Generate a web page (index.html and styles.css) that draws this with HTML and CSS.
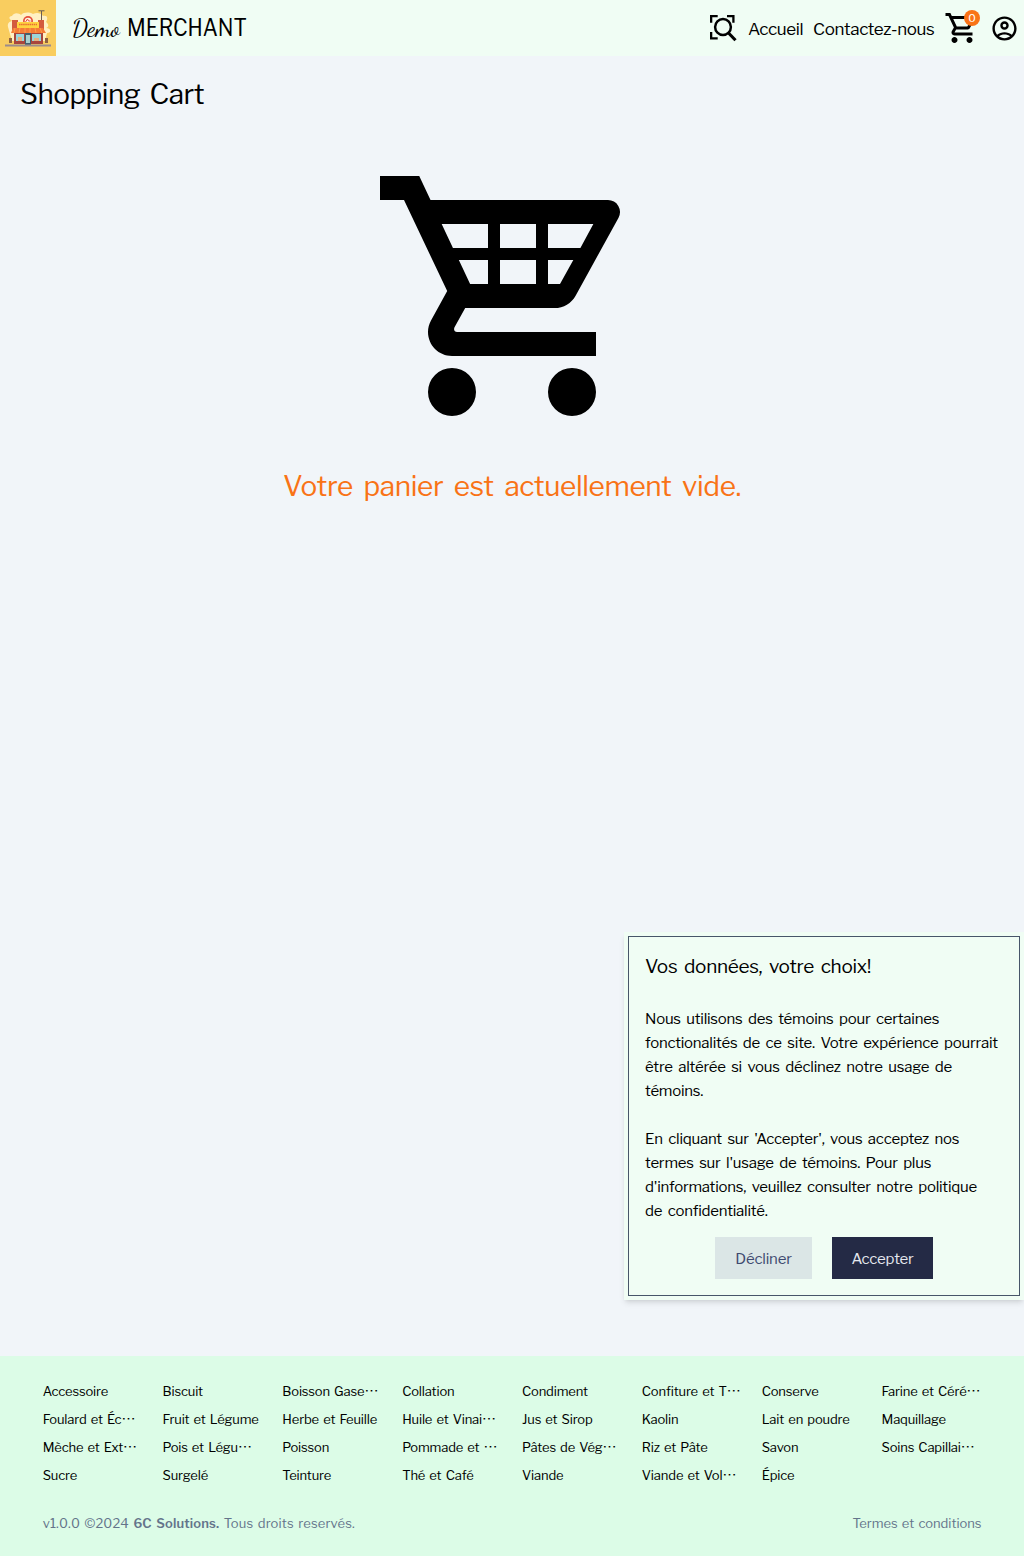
FILE: index.html
```html
<!DOCTYPE html>
<html lang="fr">
<head>
<meta charset="utf-8">
<title>Demo Merchant</title>
<link rel="stylesheet" href="styles.css">
</head>
<body>
<div class="page">
  <header class="header">
    <svg class="logo" viewBox="0 0 56 56">
      <rect width="56" height="56" fill="#f9cd5f"/>
      <path fill="#fff0c4" d="M8 27c-1-4 2-6 5-6-4-1-5-5-1-5 2-4 7-3 9-1 3-3 8-3 12-1 4-2 8-1 10 2 5-1 5 3 3 6 3 2 3 5 0 6 5 0 6 5 1 5l-2 8H12z"/>
      <path d="M41.500 11v12M38.500 10.800h6" stroke="#695c55"/>
      <path d="M12 20h6v10h-6zM38 20h6v10h-6z" fill="#d35b3e"/>
      <circle cx="28" cy="21" r="5" fill="#e64e3c"/>
      <circle cx="28" cy="21" r="3.300" fill="#fff5df"/>
      <path d="M25.500 22l2-3 1 2h2" fill="none" stroke="#e64e3c"/>
      <path d="M14 30h29v14H14z" fill="#a9453d"/>
      <path d="M16 34h8v7h-8zM32 34h9v7h-9z" fill="#9ad6dc"/>
      <path d="M25 33h6v12h-6z" fill="#43606d"/><path d="M26 35h4v8h-4z" fill="#a9cfcd"/>
      <path d="M18 37h4v4h-4zM34 38h5v3h-5z" fill="#e8b080"/>
      <path d="M17 22h22v6H17z" fill="#ffd33f"/>
      <path d="M19 24.500h18" stroke="#e86c33" stroke-width="1.600" stroke-dasharray="1.500 .6"/>
      <path d="M13 28h30l3 5H11z" fill="#f47b36"/>
      <path d="M15 28l-1 5M20 28l-1 5M25 28v5M30 28v5M35 28l1 5M40 28l2 5" stroke="#f9a04c" stroke-width="1"/>
      <path d="M9 38h3v5H9zM45 38h3v5h-3z" fill="#8e6142"/>
      <path d="M5 45.500h46" stroke="#9c8c8c" stroke-width="2"/>
    </svg>
    <div class="brand"><span class="script">Demo</span><span class="name">MERCHANT</span></div>
    <nav class="nav">
      <svg class="scan" viewBox="0 0 27 27" fill="none" stroke="#000">
        <path stroke-width="2.300" d="M1.150 7.700V1.150H7.700M17 1.150h6.400V7.700M1.150 17v6.400H7.700"/>
        <circle cx="13" cy="12" r="7.900" stroke-width="2.500"/>
        <path stroke-width="3.100" d="M18.300 17.800l7.200 7.500"/>
      </svg>
      <a class="home">Accueil</a>
      <a class="contact">Contactez-nous</a>
      <div class="basket">
        <svg viewBox="0 0 24 24"><path d="M15.550 13c.75 0 1.410-.41 1.750-1.030l3.580-6.490c.37-.66-.11-1.480-.87-1.480H5.210l-.94-2H1v2h2l3.600 7.590-1.350 2.440C4.520 15.370 5.480 17 7 17h12v-2H7l1.100-2h7.450zM6.160 6h12.150l-2.760 5H8.530L6.160 6zM7 18c-1.100 0-1.990.9-1.990 2S5.900 22 7 22s2-.9 2-2-.9-2-2-2zm10 0c-1.100 0-1.990.9-1.990 2s.89 2 1.990 2 2-.9 2-2-.9-2-2-2z"/></svg>
        <span class="badge">0</span>
      </div>
      <svg class="account" viewBox="0 0 24 24"><path d="M12 2C6.480 2 2 6.480 2 12s4.480 10 10 10 10-4.480 10-10S17.520 2 12 2zM7.350 18.500C8.660 17.560 10.260 17 12 17s3.340.56 4.650 1.500C15.340 19.440 13.740 20 12 20s-3.340-.56-4.650-1.500zm10.790-1.380C16.450 15.800 14.320 15 12 15s-4.450.8-6.140 2.120C4.700 15.730 4 13.950 4 12c0-4.420 3.580-8 8-8s8 3.580 8 8c0 1.950-.7 3.730-1.860 5.120zM12 6c-1.930 0-3.500 1.570-3.500 3.500S10.070 13 12 13s3.500-1.570 3.500-3.500S13.930 6 12 6zm0 5c-.83 0-1.500-.67-1.500-1.500S11.170 8 12 8s1.500.67 1.500 1.500S12.830 11 12 11z"/></svg>
    </nav>
  </header>

  <main class="main">
    <h1 class="title">Shopping Cart</h1>
    <div class="empty">
      <svg class="cart" viewBox="0 0 24 24"><path fill-rule="evenodd" d="M7 18a2 2 0 1 0 0 4 2 2 0 0 0 0-4zM1 2v2h2l3.600 7.590-1.350 2.450c-.16.28-.25.61-.25.96 0 1.100.9 2 2 2h12v-2H7.420c-.14 0-.25-.11-.25-.25l.03-.12.9-1.630h7.450c.75 0 1.410-.41 1.750-1.030l3.580-6.490A1.003 1.003 0 0 0 20 4H5.210l-.94-2H1zM17 18a2 2 0 1 0 0 4 2 2 0 0 0 0-4zM6.140 6H10v2H7.080zM11 6h3v2h-3zM15 6h3.780l-1.080 2H15zM7.570 9H10v2H8.510zM11 9h3v2h-3zM15 9h2.110L16 11h-1z"/></svg>
      <p class="message">Votre panier est actuellement vide.</p>
    </div>
  </main>

  <footer class="footer">
    <div class="categories">
      <a>Accessoire</a><a>Biscuit</a><a>Boisson Gase<i>…</i></a><a>Collation</a><a>Condiment</a><a>Confiture et T<i>…</i></a><a>Conserve</a><a>Farine et Céré<i>…</i></a>
      <a>Foulard et Éc<i>…</i></a><a>Fruit et Légume</a><a>Herbe et Feuille</a><a>Huile et Vinai<i>…</i></a><a>Jus et Sirop</a><a>Kaolin</a><a>Lait en poudre</a><a>Maquillage</a>
      <a>Mèche et Ext<i>…</i></a><a>Pois et Légu<i>…</i></a><a>Poisson</a><a>Pommade et <i>…</i></a><a>Pâtes de Vég<i>…</i></a><a>Riz et Pâte</a><a>Savon</a><a>Soins Capillai<i>…</i></a>
      <a>Sucre</a><a>Surgelé</a><a>Teinture</a><a>Thé et Café</a><a>Viande</a><a>Viande et Vol<i>…</i></a><a>Épice</a>
    </div>
    <div class="legal"><span>v1.0.0 ©2024 <b>6C Solutions.</b> Tous droits reservés.</span><a>Termes et conditions</a></div>
  </footer>

  <section class="consent">
    <div class="consent-box">
      <h2>Vos données, votre choix!</h2>
      <p>Nous utilisons des témoins pour certaines<br>fonctionalités de ce site. Votre expérience pourrait<br>être altérée si vous déclinez notre usage de<br>témoins.</p>
      <p>En cliquant sur 'Accepter', vous acceptez nos<br>termes sur l'usage de témoins. Pour plus<br>d'informations, veuillez consulter notre politique<br>de confidentialité.</p>
      <div class="actions"><button class="decline">Décliner</button><button class="accept">Accepter</button></div>
    </div>
  </section>
</div>
</body>
</html>
```
FILE: styles.css
```css
* { box-sizing: border-box; }
body, h1, h2, p { margin: 0; font-weight: 400; }
body { font: 15px/24px "Libre Franklin", "Liberation Sans", Arial, sans-serif; color: #000; background: #f1f5f9; }
svg { display: block; flex: none; }
.page { position: relative; height: 1556px; display: flex; flex-direction: column; }

.header { height: 56px; flex: none; display: flex; align-items: center; background: #f0fdf4; padding-right: 5px; }
.logo { width: 56px; height: 56px; }
.brand { display: flex; align-items: baseline; margin-left: 16px; font-size: 23px; line-height: 32px; white-space: nowrap; }
.script { width: 55px; font-family: "Dancing Script", "Liberation Serif", cursive; font-size: 24px; }
.name { transform: scaleX(.9); transform-origin: left; }
.nav { display: flex; align-items: center; margin-left: auto; font-size: 17px; line-height: 28px; white-space: nowrap; }
.nav a { padding-top: 1px; }
.scan { width: 27px; height: 27px; margin-right: 11px; }
.home { width: 65px; letter-spacing: -.38px; }
.contact { width: 130.500px; letter-spacing: -.33px; }
.basket { position: relative; width: 36px; height: 36px; margin-right: 10.500px; }
.basket svg { width: 36px; height: 36px; }
.badge { position: absolute; left: 20.500px; top: 0; width: 16px; height: 16px; border-radius: 50%; background: #f97316; color: #fff; font-size: 11px; line-height: 16px; text-align: center; }
.account { width: 29px; height: 29px; }

.main { flex: 1; padding: 20px; }
.title { font-size: 28px; line-height: 36px; letter-spacing: -.55px; word-spacing: 4px; }
.empty { display: flex; flex-direction: column; align-items: center; padding-top: 20px; }
.cart { width: 288px; height: 288px; margin-top: 20px; }
.message { margin-top: 28px; color: #f97316; font-size: 28px; line-height: 36px; letter-spacing: -.38px; word-spacing: 5px; }

.footer { height: 200px; flex: none; background: #dcfce7; padding: 21px 42.670px 0; font-size: 13px; line-height: 28px; word-spacing: 1.500px; }
.categories { display: grid; grid-template-columns: repeat(8, 1fr); column-gap: 20px; letter-spacing: -.15px; white-space: nowrap; }
.categories a { min-width: 0; height: 28px; }
.categories i { font: 14px/1 "IPAPGothic", "Noto Sans CJK JP", sans-serif; letter-spacing: 0; }
.legal { display: flex; justify-content: space-between; margin-top: 20px; color: #64748b; letter-spacing: -.05px; }
.legal span { letter-spacing: .15px; }
.legal b { font-weight: 600; }

.consent { position: absolute; right: 0; top: 932px; width: 400px; height: 368px; padding: 4px; background: #f0fdf4; box-shadow: 0 4px 6px -1px rgba(0,0,0,.1), 0 2px 4px -2px rgba(0,0,0,.1); }
.consent-box { height: 100%; padding: 16px; border: 1px solid #475569; white-space: nowrap; letter-spacing: -.23px; word-spacing: 2.500px; }
.consent h2 { font-size: 19px; line-height: 28px; letter-spacing: -.32px; word-spacing: 3px; margin-bottom: 26px; }
.consent p + p { margin-top: 24px; }
.actions { display: flex; justify-content: center; gap: 20px; margin-top: 14px; }
.actions button { height: 42px; padding: 2px 0 0; border: 0; font: inherit; letter-spacing: -.2px; }
.decline { width: 97px; background: #dbe6e6; color: #3f4a70; }
.accept { width: 101px; background: #242a45; color: #e5e7ee; }
```
